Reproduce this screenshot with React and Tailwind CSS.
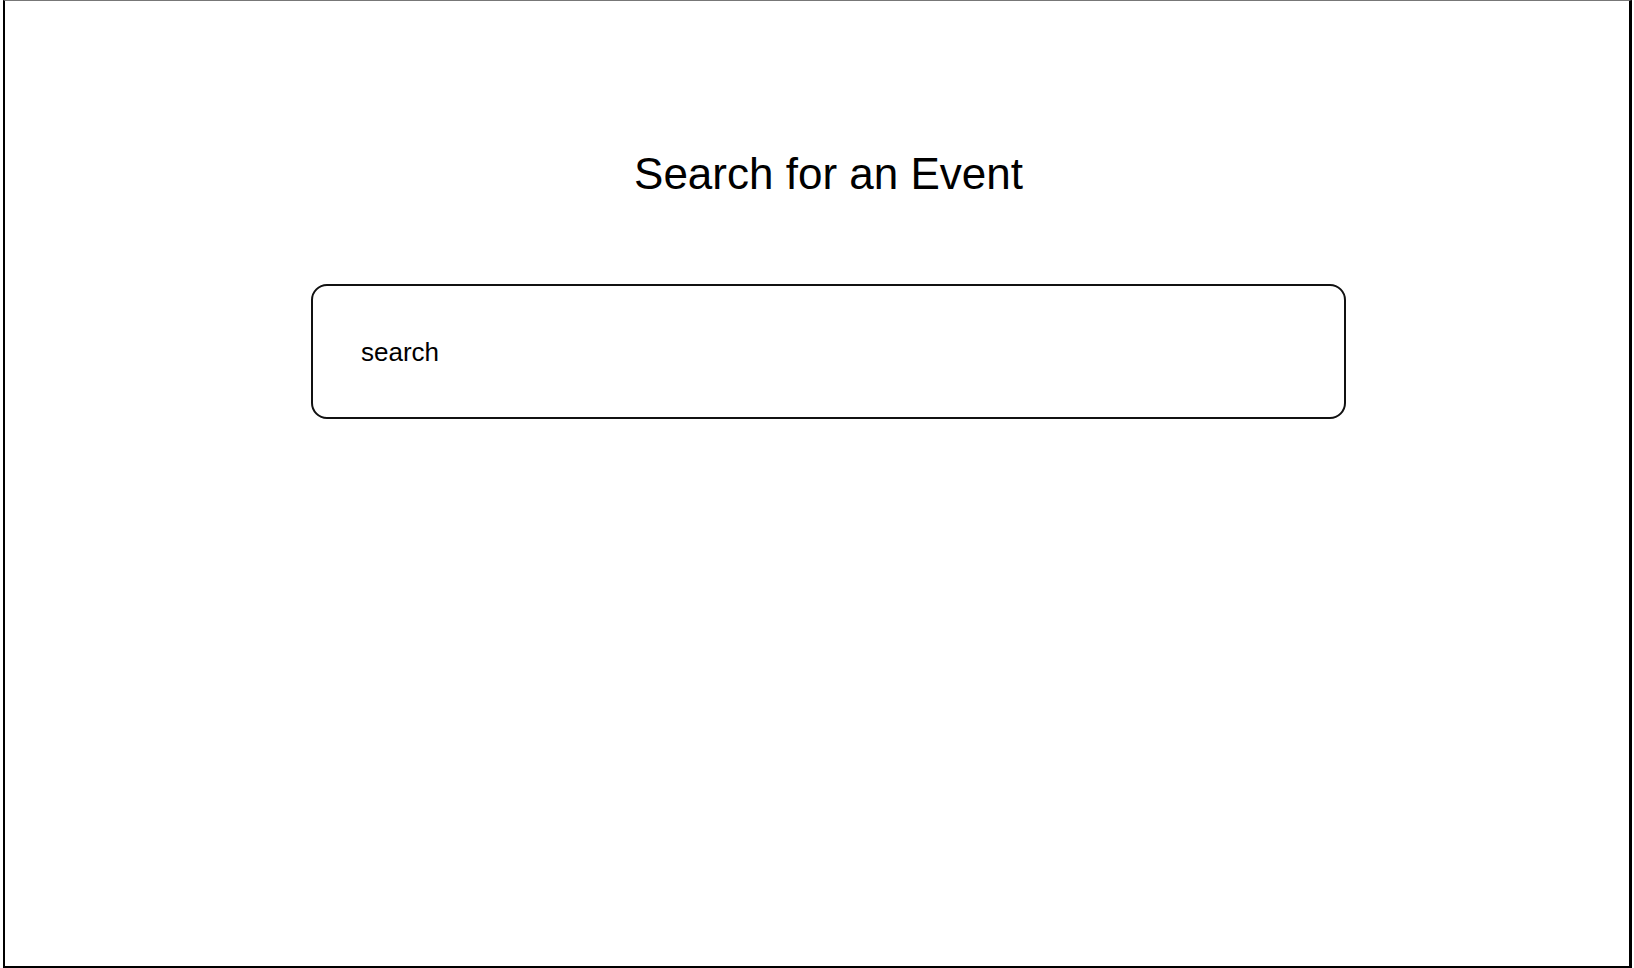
import React from "react";

export default function App() {
  return (
    <div
      className="w-[1634px] h-[968px] bg-white overflow-hidden"
      style={{ fontFamily: '"Liberation Sans", Arial, Helvetica, sans-serif' }}
    >
      <div className="ml-[3px] w-[1629px] h-[968px] border-l-2 border-r-[3px] border-b-2 border-t border-black border-t-[#777777] bg-white">
        <div className="ml-[306px] w-[1035px] pt-[147px] flex flex-col">
          <h1 className="text-[44px] leading-[52px] text-center text-black font-normal">
            Search for an Event
          </h1>
          <div className="mt-[84px] h-[135px] border-2 border-[#111111] rounded-[16px] flex items-center pl-[48px]">
            <span className="text-[26px] leading-[28px] text-black">search</span>
          </div>
        </div>
      </div>
    </div>
  );
}
